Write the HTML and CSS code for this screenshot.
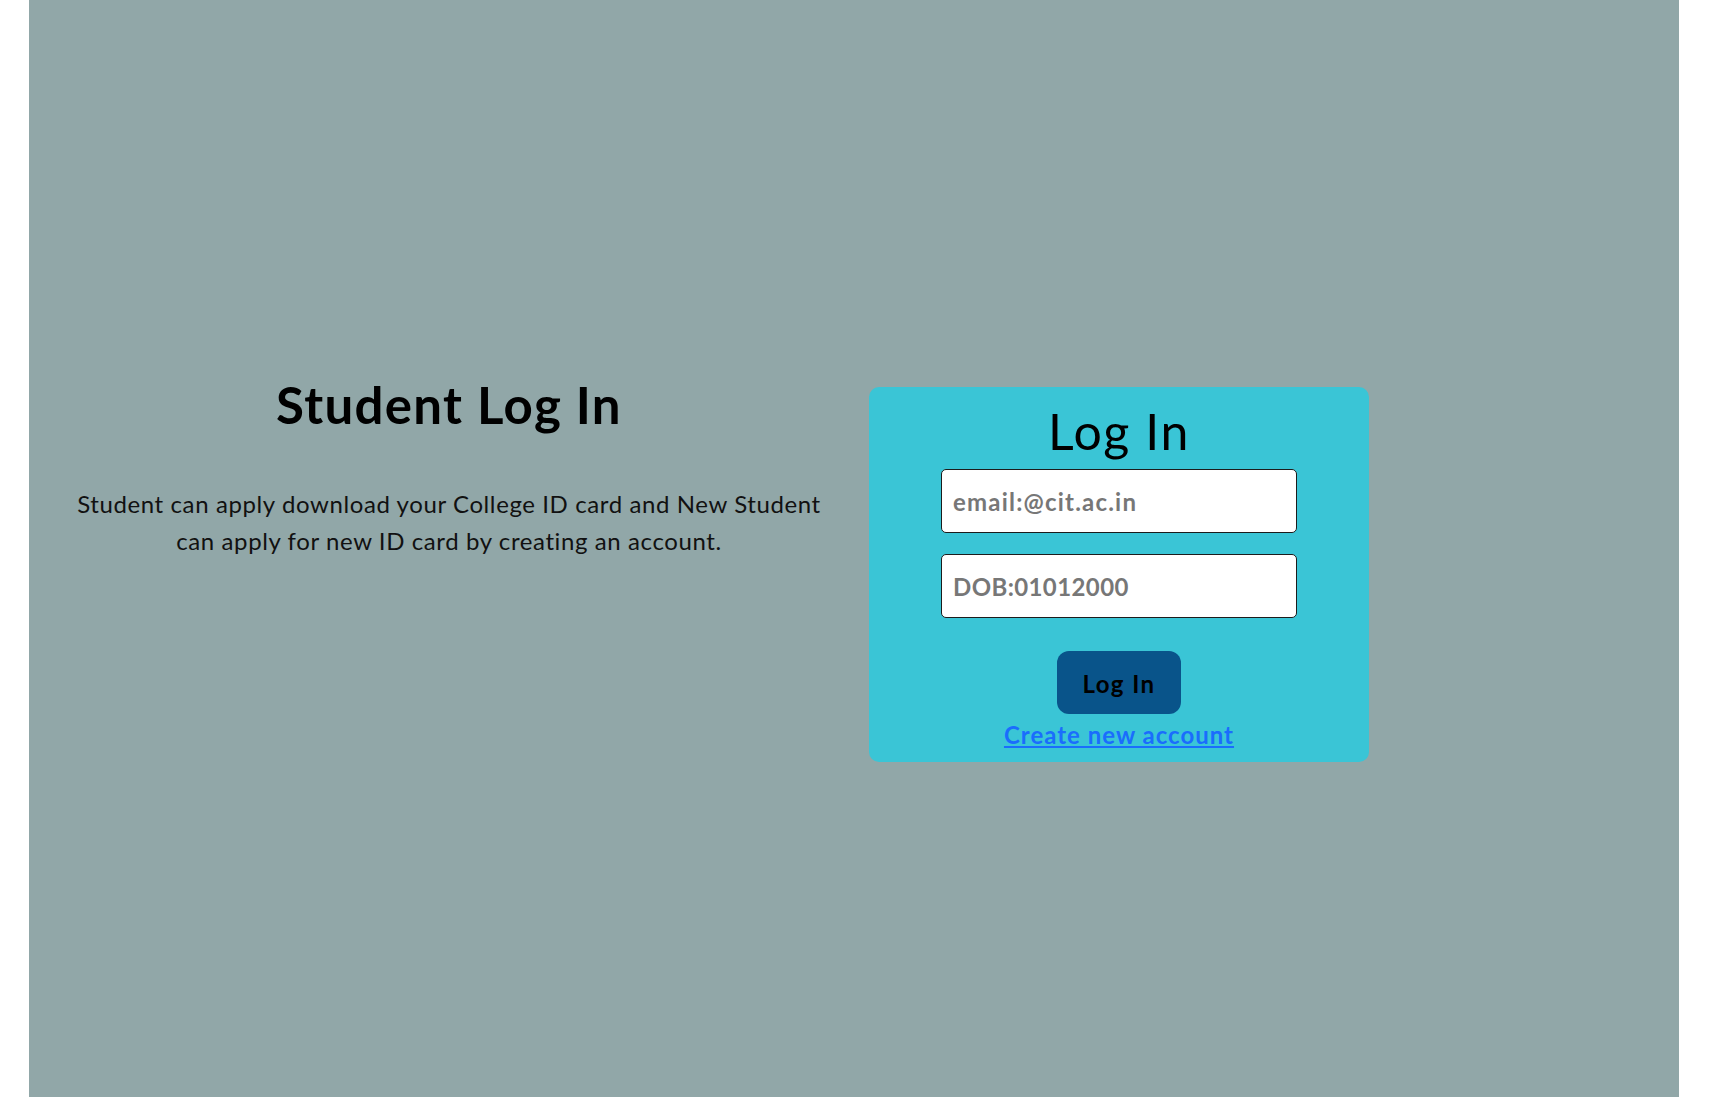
FILE: index.html
```html
<!DOCTYPE html>
<html lang="en">
<head>
<meta charset="utf-8">
<title>Student Log In</title>
<link rel="stylesheet" href="styles.css">
</head>
<body>
<main class="page">
  <section class="intro">
    <h1 class="intro-title">Student Log In</h1>
    <p class="intro-text">Student can apply download your College ID card and New Student can apply for new ID card by creating an account.</p>
  </section>
  <form class="card">
    <h2 class="card-title">Log In</h2>
    <input class="field field-email" type="text" placeholder="email:@cit.ac.in">
    <input class="field field-dob" type="text" placeholder="DOB:01012000">
    <button class="btn" type="button">Log In</button>
    <a class="link" href="#">Create new account</a>
  </form>
</main>
</body>
</html>
```

FILE: styles.css
```css
html, body {
  margin: 0;
  padding: 0;
  background: #ffffff;
}

body {
  font-family: Lato, "Open Sans", "Liberation Sans", sans-serif;
}

.page {
  box-sizing: border-box;
  margin: 0 0 0 29px;
  width: 1650px;
  min-height: 1097px;
  background: #91a7a8;
  display: flex;
  align-items: flex-start;
  padding-top: 374px;
}

.intro {
  width: 840px;
  flex: none;
  text-align: center;
}

.intro-title {
  margin: 0;
  font-size: 51px;
  line-height: 61px;
  font-weight: 700;
  letter-spacing: 1.3px;
  color: #000;
}

.intro-text {
  margin: 50px auto 0;
  width: 770px;
  font-size: 24px;
  line-height: 37px;
  letter-spacing: 0.6px;
  color: #111;
}

.card {
  box-sizing: border-box;
  flex: none;
  width: 500px;
  height: 375px;
  margin-top: 13px;
  padding: 14px 0 12px;
  background: #3ac5d6;
  border-radius: 10px;
  display: flex;
  flex-direction: column;
  align-items: center;
}

.card-title {
  margin: 0 0 8px;
  font-size: 50px;
  line-height: 60px;
  font-weight: 400;
  letter-spacing: 1.6px;
  color: #000;
}

.field {
  box-sizing: border-box;
  width: 356px;
  height: 64px;
  margin: 0;
  padding: 0 11px;
  border: 1px solid #1c1c1c;
  border-radius: 5px;
  background: #fff;
  font-family: inherit;
  font-size: 24px;
  font-weight: 700;
  color: #333;
  outline: none;
}

.field::placeholder {
  color: #777;
  opacity: 1;
}

.field-email {
  letter-spacing: 1.2px;
}

.field-dob {
  margin-top: 21px;
  letter-spacing: 0.4px;
}

.btn {
  box-sizing: border-box;
  margin-top: 33px;
  width: 124px;
  height: 63px;
  padding-top: 2px;
  border: none;
  border-radius: 12px;
  background: #09548a;
  font-family: inherit;
  font-size: 24px;
  font-weight: 700;
  letter-spacing: 1.4px;
  color: #000;
  cursor: pointer;
}

.link {
  margin-top: 6px;
  font-size: 24px;
  line-height: 30px;
  font-weight: 700;
  letter-spacing: 1px;
  color: #1a6dfd;
  text-decoration: underline;
}
```
